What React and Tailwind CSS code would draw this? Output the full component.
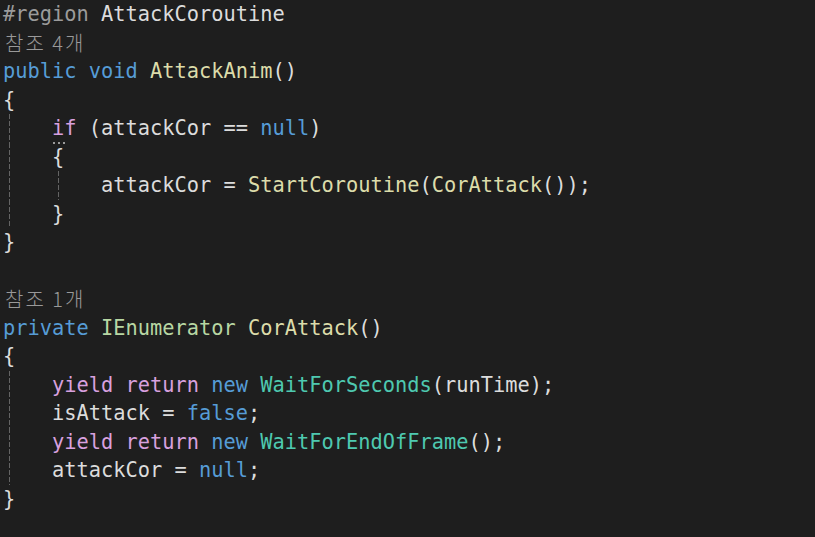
const KW = "text-[#569cd6]";
const CTL = "text-[#d8a0df]";
const TYPE = "text-[#4ec9b0]";
const IFACE = "text-[#b8d7a3]";
const FN = "text-[#dcdcaa]";
const TXT = "text-[#dcdcdc]";
const PRE = "text-[#9b9b9b]";

function Guide() {
  return (
    <span className="relative inline-block w-[49px] self-stretch">
      <span className="absolute left-[6px] top-0 bottom-0 w-px bg-[repeating-linear-gradient(to_bottom,#646464_0_5px,transparent_5px_7px)]" />
    </span>
  );
}

function Line({ guides = 0, children }) {
  return (
    <div className="flex h-[28.5px] items-center whitespace-pre">
      {Array.from({ length: guides }).map((_, i) => (
        <Guide key={i} />
      ))}
      <span>{children}</span>
    </div>
  );
}

function Lens({ children }) {
  return (
    <div className="flex h-[28.5px] items-center pl-[2px] font-['Noto_Sans_CJK_KR',sans-serif] text-[20px] font-light tracking-[2px] text-[#999999]">
      {children}
    </div>
  );
}

export default function App() {
  return (
    <div className="h-[537px] w-[815px] overflow-hidden bg-[#1e1e1e] pl-[3px] font-['DejaVu_Sans_Mono',monospace] text-[20.35px] text-[#dcdcdc]">
      <Line>
        <span className={PRE}>#region </span>
        <span className={TXT}>AttackCoroutine</span>
      </Line>
      <Lens>참조 4개</Lens>
      <Line>
        <span className={KW}>public void </span>
        <span className={FN}>AttackAnim</span>
        <span>()</span>
      </Line>
      <Line>{"{"}</Line>
      <Line guides={1}>
        <span className={`${CTL} relative`}>
          if
          <span className="absolute left-[1px] top-[26px] flex gap-[3px]">
            <span className="h-[2px] w-[2px] bg-[#9a9a9a]" />
            <span className="h-[2px] w-[2px] bg-[#9a9a9a]" />
            <span className="h-[2px] w-[2px] bg-[#9a9a9a]" />
          </span>
        </span>
        <span> (attackCor == </span>
        <span className={KW}>null</span>
        <span>)</span>
      </Line>
      <Line guides={1}>{"{"}</Line>
      <Line guides={2}>
        <span>attackCor = </span>
        <span className={FN}>StartCoroutine</span>
        <span>(</span>
        <span className={FN}>CorAttack</span>
        <span>());</span>
      </Line>
      <Line guides={1}>{"}"}</Line>
      <Line>{"}"}</Line>
      <Line> </Line>
      <Lens>참조 1개</Lens>
      <Line>
        <span className={KW}>private </span>
        <span className={IFACE}>IEnumerator </span>
        <span className={FN}>CorAttack</span>
        <span>()</span>
      </Line>
      <Line>{"{"}</Line>
      <Line guides={1}>
        <span className={CTL}>yield return </span>
        <span className={KW}>new </span>
        <span className={TYPE}>WaitForSeconds</span>
        <span>(runTime);</span>
      </Line>
      <Line guides={1}>
        <span>isAttack = </span>
        <span className={KW}>false</span>
        <span>;</span>
      </Line>
      <Line guides={1}>
        <span className={CTL}>yield return </span>
        <span className={KW}>new </span>
        <span className={TYPE}>WaitForEndOfFrame</span>
        <span>();</span>
      </Line>
      <Line guides={1}>
        <span>attackCor = </span>
        <span className={KW}>null</span>
        <span>;</span>
      </Line>
      <Line>{"}"}</Line>
    </div>
  );
}
